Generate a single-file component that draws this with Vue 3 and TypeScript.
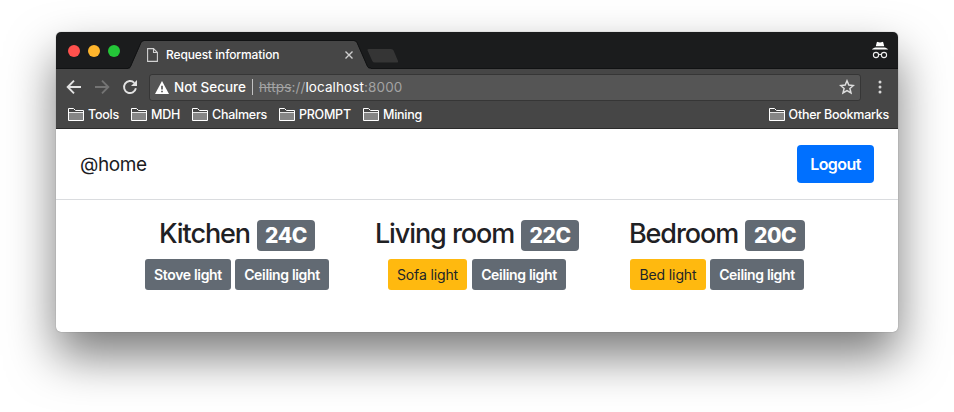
<script setup lang="ts">
interface Light {
  name: string
  on: boolean
  width: number
}
interface Room {
  name: string
  temperature: string
  badgeWidth: number
  gap: number
  lights: Light[]
}

const bookmarks: { label: string; width: number }[] = [
  { label: 'Tools', width: 63 },
  { label: 'MDH', width: 61 },
  { label: 'Chalmers', width: 87 },
  { label: 'PROMPT', width: 84 },
  { label: 'Mining', width: 70 },
]

const rooms: Room[] = [
  {
    name: 'Kitchen',
    temperature: '24C',
    badgeWidth: 58,
    gap: 4,
    lights: [
      { name: 'Stove light', on: false, width: 86 },
      { name: 'Ceiling light', on: false, width: 94 },
    ],
  },
  {
    name: 'Living room',
    temperature: '22C',
    badgeWidth: 58,
    gap: 5,
    lights: [
      { name: 'Sofa light', on: true, width: 79 },
      { name: 'Ceiling light', on: false, width: 94 },
    ],
  },
  {
    name: 'Bedroom',
    temperature: '20C',
    badgeWidth: 60,
    gap: 4,
    lights: [
      { name: 'Bed light', on: true, width: 76 },
      { name: 'Ceiling light', on: false, width: 94 },
    ],
  },
]
</script>

<template>
  <div class="desktop">
    <div class="window">
      <header class="tabstrip">
        <div class="traffic">
          <i class="dot red"></i><i class="dot yellow"></i><i class="dot green"></i>
        </div>
        <div class="tab">
          <svg class="tab-shape" width="243" height="29" viewBox="0 0 243 29">
            <path d="M0 28.5C1.5 28.5 2 28 2.5 27L13 3Q14 1 16 1H226Q228 1 229 3L239.500 27Q240 28.500 243 28.500V29H0Z" fill="#464646" />
            <path d="M0 28C1.500 28 2 27.500 2.500 26.500L13 2.500Q14 .5 16 .5H226Q228 .5 229 2.500L239.500 26.500Q240 28 243 28" fill="none" stroke="#111213" />
          </svg>
          <svg class="page-icon" width="11" height="14" viewBox="0 0 11 14">
            <path d="M.6.6H6.500L10.400 4.500V13.400H.6ZM6.500.6V4.500H10.400" fill="none" stroke="#d2d2d2" stroke-width="1.100" />
          </svg>
          <span class="tab-title">Request information</span>
          <svg class="close" width="8" height="8" viewBox="0 0 8 8">
            <path d="M.5.5L7.500 7.500M7.500.5L.5 7.500" stroke="#cfcfcf" stroke-width="1.400" />
          </svg>
        </div>
        <svg class="new-tab" width="34" height="16" viewBox="0 0 34 16">
          <path d="M2.500 1H25Q27 1 27.600 2.500L32 13Q32.500 14.500 31 14.500H9Q7 14.500 6.300 13L1.600 2.500Q1 1 2.500 1Z" fill="#353535" />
        </svg>
        <svg class="incognito" width="18" height="18" viewBox="0 0 18 18">
          <path d="M5.800 1.300Q6 .7 6.700.9L9 1.500 11.300.9Q12 .7 12.200 1.300L13.200 5.200H4.800Z" fill="#fff" />
          <path d="M.8 8.500Q1.500 7.500 4 6.500H14Q16.500 7.500 17.200 8.500Z" fill="#fff" />
          <circle cx="5" cy="14" r="2.600" fill="none" stroke="#eee" stroke-width="1.100" />
          <circle cx="13" cy="14" r="2.600" fill="none" stroke="#eee" stroke-width="1.100" />
          <path d="M7.600 13.700Q9 12.700 10.400 13.700" fill="none" stroke="#eee" stroke-width="1.100" />
        </svg>
      </header>

      <div class="toolbar">
        <svg class="nav-icon" width="16" height="16" viewBox="0 0 16 16">
          <path d="M15 8H2M8 1.700L1.700 8 8 14.300" fill="none" stroke="#e2e2e2" stroke-width="1.900" />
        </svg>
        <svg class="nav-icon" width="16" height="16" viewBox="0 0 16 16">
          <path d="M1 8H14M8 1.700L14.300 8 8 14.300" fill="none" stroke="#747474" stroke-width="1.900" />
        </svg>
        <svg class="nav-icon" width="16" height="16" viewBox="0 0 16 16">
          <path d="M13.900 9.300A6 6 0 1 1 12.300 3.800" fill="none" stroke="#e2e2e2" stroke-width="1.900" />
          <path d="M15 1V7H9Z" fill="#e2e2e2" />
        </svg>
        <div class="omnibox">
          <svg class="warning" width="14" height="13" viewBox="0 0 14 13">
            <path d="M7 0L14 13H0Z" fill="#fff" />
            <path d="M7 4.700V8.400M7 9.700V11.300" stroke="#555" stroke-width="1.700" />
          </svg>
          <span class="not-secure">Not Secure</span>
          <span class="divider"></span>
          <span class="url"><s>https</s>://<b>localhost</b>:8000</span>
          <svg class="star" width="16" height="16" viewBox="0 0 16 16">
            <path d="M8 1.800L9.800 6.100 14.400 6.500 10.900 9.500 12 14 8 11.600 4 14 5.100 9.500 1.600 6.500 6.200 6.100Z" fill="none" stroke="#dedede" stroke-width="1.500" />
          </svg>
        </div>
        <svg class="menu" width="4" height="14" viewBox="0 0 4 14">
          <g fill="#d8d8d8"><circle cx="2" cy="2" r="1.500" /><circle cx="2" cy="7" r="1.500" /><circle cx="2" cy="12" r="1.500" /></g>
        </svg>
      </div>

      <nav class="bookmarks">
        <span v-for="b in bookmarks" :key="b.label" class="bookmark" :style="{ width: b.width + 'px' }">
          <svg width="16" height="13" viewBox="0 0 16 13">
            <path d="M.5 12.500V.5H5.500L7.500 2.500H15.500V12.500Z" fill="#464646" stroke="#fff" />
            <path d="M1 5H15V12H1Z" fill="#858585" /><path d="M1 4.500H15" stroke="#e6e6e6" />
          </svg>
          <span class="label">{{ b.label }}</span>
        </span>
        <span class="bookmark other">
          <svg width="16" height="13" viewBox="0 0 16 13">
            <path d="M.5 12.500V.5H5.500L7.500 2.500H15.500V12.500Z" fill="#464646" stroke="#fff" />
            <path d="M1 5H15V12H1Z" fill="#858585" /><path d="M1 4.500H15" stroke="#e6e6e6" />
          </svg>
          <span class="label">Other Bookmarks</span>
        </span>
      </nav>

      <main class="page">
        <div class="navbar">
          <span class="brand">@home</span>
          <button class="logout">Logout</button>
        </div>
        <div class="rooms">
          <section v-for="room in rooms" :key="room.name" class="room">
            <h2>
              <span class="room-name">{{ room.name }}</span>
              <span class="badge" :style="{ width: room.badgeWidth + 'px' }">{{ room.temperature }}</span>
            </h2>
            <div class="lights" :style="{ gap: room.gap + 'px' }">
              <button
                v-for="light in room.lights"
                :key="light.name"
                class="light"
                :class="{ on: light.on }"
                :style="{ width: light.width + 'px' }"
              >{{ light.name }}</button>
            </div>
          </section>
        </div>
      </main>
    </div>
  </div>
</template>

<style>
body {
  background: #fff;
  overflow: hidden;
}
</style>

<style scoped>
.desktop {
  box-sizing: border-box;
  width: 954px;
  height: 412px;
  padding: 32px 56px 80px;
  font-family: Inter, 'Liberation Sans', sans-serif;
}
.window {
  height: 300px;
  border-radius: 5px;
  overflow: hidden;
  display: flex;
  flex-direction: column;
  background: #fff;
  box-shadow: 0 0 1px rgba(0, 0, 0, 0.5), 0 24px 48px rgba(0, 0, 0, 0.52);
}
svg {
  display: block;
  flex: none;
}
button {
  border: 0;
  padding: 0;
  font-family: inherit;
  white-space: nowrap;
}
.tabstrip {
  box-sizing: border-box;
  height: 37px;
  flex: none;
  display: flex;
  align-items: flex-end;
  background: #1b1c1d;
  background-image: linear-gradient(#111213, #111213);
  background-size: 100% 1px;
  background-position: bottom;
  background-repeat: no-repeat;
}
.traffic {
  display: flex;
  gap: 8px;
  padding: 0 2px 12px 12px;
  width: 58px;
}
.dot {
  width: 12px;
  height: 12px;
  border-radius: 50%;
}
.red { background: #ff514d; }
.yellow { background: #ffb52c; }
.green { background: #24c638; }
.tab {
  position: relative;
  width: 243px;
  height: 29px;
  display: flex;
  align-items: center;
}
.tab-shape {
  position: absolute;
  left: 0;
  top: 0;
}
.page-icon {
  position: relative;
  margin-left: 19px;
}
.tab-title {
  position: relative;
  margin-left: 8px;
  width: 179px;
  color: #fff;
  font-size: 12px;
  font-weight: 500;
  letter-spacing: -0.12px;
  white-space: nowrap;
}
.close {
  position: relative;
}
.new-tab {
  margin: 0 0 5px -5px;
}
.incognito {
  margin: 0 9px 10px auto;
}
.toolbar {
  height: 36px;
  flex: none;
  display: flex;
  align-items: center;
  background: #464646;
  padding-left: 10px;
}
.nav-icon {
  margin-right: 12px;
}
.omnibox {
  box-sizing: border-box;
  width: 712px;
  height: 27px;
  margin-left: -1px;
  display: flex;
  align-items: center;
  background: #555;
  border: 1px solid #363636;
  border-radius: 3px;
  padding: 0 5px;
}
.not-secure {
  margin-left: 5px;
  width: 78px;
  color: #fff;
  font-weight: 500;
  font-size: 13.500px;
  white-space: nowrap;
}
.divider {
  width: 1px;
  height: 16px;
  background: #c2c2c2;
}
.url {
  margin-left: 6px;
  color: #a3a3a3;
  font-size: 13.500px;
  letter-spacing: 0.11px;
  white-space: nowrap;
}
.url b {
  font-weight: 400;
  color: #fff;
}
.star {
  margin-left: auto;
}
.menu {
  margin-left: 17px;
}
.bookmarks {
  box-sizing: border-box;
  height: 24px;
  flex: none;
  display: flex;
  align-items: flex-start;
  padding: 3px 9px 0 12px;
  background: #464646;
  border-bottom: 1px solid #2b2b2b;
}
.bookmark {
  display: flex;
  align-items: center;
  gap: 4px;
  height: 13px;
  color: #fff;
  font-size: 12.500px;
  font-weight: 500;
  letter-spacing: -0.25px;
  white-space: nowrap;
}
.label {
  line-height: 13px;
}
.other {
  margin-left: auto;
}
.navbar {
  box-sizing: border-box;
  height: 71px;
  padding: 0 24px;
  display: flex;
  align-items: center;
  justify-content: space-between;
  border-bottom: 1px solid #dadcdf;
}
.brand {
  font-size: 19px;
  letter-spacing: -0.4px;
  color: #1b1c1f;
}
.logout {
  width: 77px;
  height: 38px;
  border-radius: 4px;
  background: #0070ff;
  color: #fff;
  font-size: 16px;
  font-weight: 600;
  letter-spacing: -0.55px;
}
.rooms {
  width: 720px;
  margin: 20px auto 0;
  display: grid;
  grid-template-columns: repeat(3, 240px);
}
.room {
  display: flex;
  flex-direction: column;
  align-items: center;
}
h2 {
  margin: 0 0 8px;
  height: 31px;
  display: flex;
  gap: 7px;
  align-items: flex-start;
  color: #1f2124;
  font-size: 27px;
  font-weight: 500;
  white-space: nowrap;
}
.room-name {
  line-height: 28px;
  letter-spacing: -1.08px;
}
.badge {
  height: 31px;
  line-height: 31px;
  border-radius: 4px;
  background: #626a73;
  color: #fff;
  font-size: 21px;
  font-weight: 800;
  letter-spacing: -0.4px;
  text-align: center;
}
.lights {
  display: flex;
}
.light {
  height: 31px;
  border-radius: 3px;
  background: #626a73;
  color: #fff;
  font-size: 14px;
  font-weight: 600;
  letter-spacing: -0.33px;
}
.light.on {
  background: #ffb90f;
  color: #212529;
  font-weight: 400;
  letter-spacing: -0.12px;
}
</style>
